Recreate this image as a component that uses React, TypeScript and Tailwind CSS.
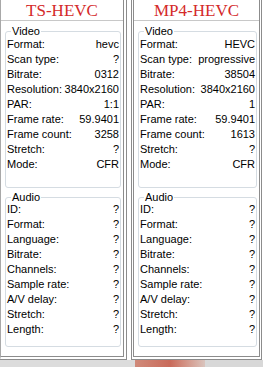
import React from 'react';

type Row = [string, string];

const videoLeft: Row[] = [
  ['Format:', 'hevc'],
  ['Scan type:', '?'],
  ['Bitrate:', '0312'],
  ['Resolution:', '3840x2160'],
  ['PAR:', '1:1'],
  ['Frame rate:', '59.9401'],
  ['Frame count:', '3258'],
  ['Stretch:', '?'],
  ['Mode:', 'CFR'],
];

const videoRight: Row[] = [
  ['Format:', 'HEVC'],
  ['Scan type:', 'progressive'],
  ['Bitrate:', '38504'],
  ['Resolution:', '3840x2160'],
  ['PAR:', '1'],
  ['Frame rate:', '59.9401'],
  ['Frame count:', '1613'],
  ['Stretch:', '?'],
  ['Mode:', 'CFR'],
];

const audio: Row[] = [
  ['ID:', '?'],
  ['Format:', '?'],
  ['Language:', '?'],
  ['Bitrate:', '?'],
  ['Channels:', '?'],
  ['Sample rate:', '?'],
  ['A/V delay:', '?'],
  ['Stretch:', '?'],
  ['Length:', '?'],
];

function Group({ label, rows, className }: { label: string; rows: Row[]; className: string }) {
  return (
    <div className={`relative border border-[#d5dce2] rounded-[3px] px-[1px] ${className}`}>
      <span className="absolute -top-[8px] left-[5px] bg-white px-[1px] leading-[15px]">{label}</span>
      {rows.map(([k, v]) => (
        <div key={k} className="flex justify-between h-[15px] leading-[15px] whitespace-nowrap">
          <span>{k}</span>
          <span>{v}</span>
        </div>
      ))}
    </div>
  );
}

function Panel({ title, video, size, className }: { title: string; video: Row[]; size: string; className: string }) {
  return (
    <div className={`flex flex-col bg-white ${className}`}>
      <div className={`h-[21px] border-b border-[#c8c8c8] flex items-center justify-center text-[#d42a2a] leading-[21px] ${size}`} style={{ fontFamily: '"Liberation Serif", serif' }}>
        {title}
      </div>
      <div className="flex flex-col pl-[4px] pr-[2px]">
        <Group label="Video" rows={video} className="mt-[10px] pt-[5px] pb-[15px]" />
        <Group label="Audio" rows={audio} className="mt-[9px] pt-[4px] pb-[9px]" />
      </div>
      <div className="flex-1" />
    </div>
  );
}

export default function App() {
  return (
    <div className="w-[263px] h-[367px] bg-[#e8e8e8] flex flex-col overflow-hidden text-[11px] text-black" style={{ fontFamily: '"Liberation Sans", Arial, sans-serif' }}>
      <div className="flex h-[360px] bg-[#f4f4f4]">
        <Panel title="TS-HEVC" video={videoLeft} size="text-[17px]" className="w-[127px] border-l border-l-[#a8a8a8] border-r-[4px] border-r-[#8c8c8c] border-double border-b-[4px] border-b-[#8c8c8c]" />
        <div className="w-[4px] bg-white" />
        <Panel title="MP4-HEVC" video={videoRight} size="text-[17px]" className="w-[131px] border-l-[3px] border-r-[3px] border-b-[4px] border-[#8c8c8c] border-double" />
        <div className="flex-1 bg-white" />
      </div>
      <div className="flex-1 flex">
        <div className="w-[135px] bg-[#dcdcdc]" />
        <div className="w-[70px] bg-gradient-to-r from-[#d08a7a] via-[#c96a5a] to-[#d9c4bd]" />
        <div className="flex-1 bg-[#d8d8d8]" />
      </div>
    </div>
  );
}
